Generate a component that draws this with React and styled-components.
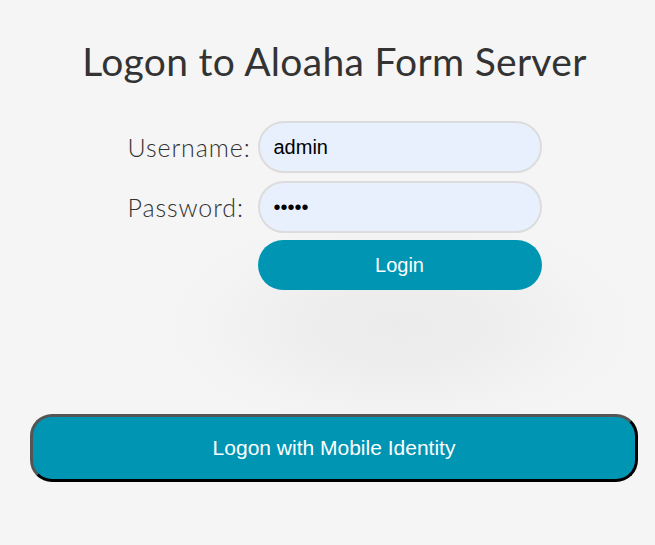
import React from "react";
import styled, { createGlobalStyle } from "styled-components";

const GlobalStyle = createGlobalStyle`
  html, body {
    margin: 0;
    padding: 0;
  }
  body {
    width: 655px;
    height: 545px;
    overflow: hidden;
    background-color: #f5f5f5;
    background-image: radial-gradient(
      ellipse 230px 110px at 400px 325px,
      #ebebeb 0%,
      #eeeeee 40%,
      #f5f5f5 100%
    );
    font-family: "Lato", "Liberation Sans", sans-serif;
  }
`;

const Page = styled.div`
  padding: 36px 0 0 14px;
  display: flex;
  flex-direction: column;
  align-items: center;
`;

const Title = styled.h1`
  margin: 0;
  font-family: "Lato", sans-serif;
  font-weight: 400;
  font-size: 39px;
  line-height: 50px;
  color: #333;
  letter-spacing: 0.3px;
`;

const Form = styled.form`
  margin-top: 35px;
  display: grid;
  grid-template-columns: 130px 284px;
  row-gap: 8px;
  align-items: center;
`;

const Label = styled.label`
  font-family: "Lato", sans-serif;
  font-size: 25px;
  font-weight: 300;
  letter-spacing: 0.9px;
  color: #333;
`;

const Input = styled.input`
  box-sizing: border-box;
  width: 284px;
  height: 52px;
  padding: 0 14px;
  border: 2px solid #dcdcdc;
  border-radius: 26px;
  background: #e8f0fe;
  font-family: "Liberation Sans", Arial, sans-serif;
  font-size: 20px;
  color: #000;
  outline: none;
`;

const Button = styled.button`
  box-sizing: border-box;
  grid-column: 2;
  height: 50px;
  margin-top: -1px;
  border: none;
  border-radius: 25px;
  background: #0095b3;
  color: #fff;
  font-family: "Liberation Sans", Arial, sans-serif;
  font-size: 20px;
  cursor: pointer;
`;

const MobileButton = styled.button`
  box-sizing: border-box;
  align-self: stretch;
  margin: 124px 17px 0 16px;
  height: 68px;
  border: 3px solid;
  border-color: #555 #000 #000 #555;
  border-radius: 22px;
  background: #0095b3;
  color: #fff;
  font-family: "Liberation Sans", Arial, sans-serif;
  font-size: 21px;
  cursor: pointer;
`;

export default function App() {
  return (
    <>
      <GlobalStyle />
      <Page>
        <Title>Logon to Aloaha Form Server</Title>
        <Form onSubmit={(e) => e.preventDefault()}>
          <Label htmlFor="user">Username:</Label>
          <Input id="user" type="text" defaultValue="admin" />
          <Label htmlFor="pass">Password:</Label>
          <Input id="pass" type="password" defaultValue="admin" />
          <Button type="submit">Login</Button>
        </Form>
        <MobileButton type="button">Logon with Mobile Identity</MobileButton>
      </Page>
    </>
  );
}
